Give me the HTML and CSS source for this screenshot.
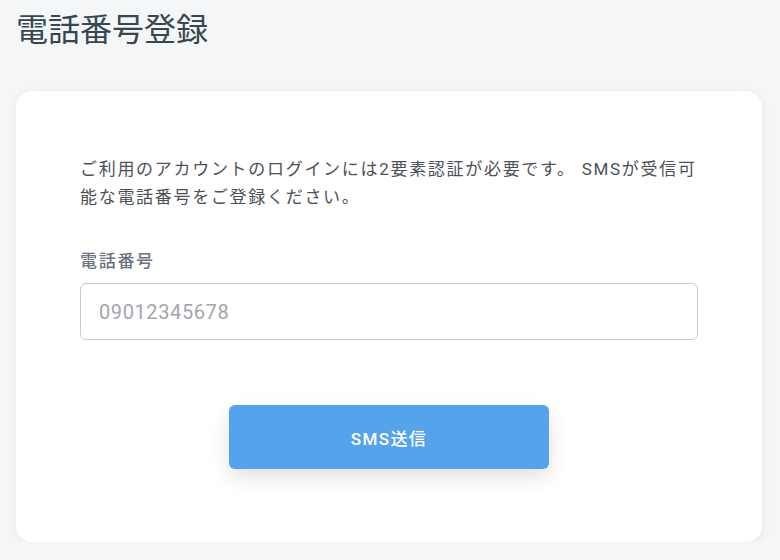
FILE: index.html
```html
<!DOCTYPE html>
<html lang="ja">
<head>
<meta charset="utf-8">
<title>電話番号登録</title>
<link rel="stylesheet" href="styles.css">
</head>
<body>
<main class="page">
  <h1 class="title">電話番号登録</h1>
  <section class="card">
    <p class="lead">ご利用のアカウントのログインには2要素認証が必要です。 SMSが受信可能な電話番号をご登録ください。</p>
    <label class="label" for="tel">電話番号</label>
    <input class="input" id="tel" type="tel" placeholder="09012345678">
    <div class="actions">
      <button class="btn" type="button">SMS送信</button>
    </div>
  </section>
</main>
</body>
</html>
```

FILE: styles.css
```css
* { box-sizing: border-box; }
html, body { margin: 0; padding: 0; }
body {
  background: #f5f6f8;
  font-family: Roboto, "Noto Sans CJK JP", sans-serif;
  color: #4b5157;
}
.page {
  padding: 10px 16px 0 16px;
  width: 780px;
}
.title {
  margin: 0;
  font-size: 32px;
  line-height: 40px;
  font-weight: 400;
  color: #37474f;
}
.card {
  margin-top: 41px;
  width: 746px;
  height: 451px;
  background: #fff;
  border-radius: 16px;
  box-shadow: 0 2px 12px rgba(0, 0, 0, 0.06);
  padding: 64px 64px 0 64px;
  display: flex;
  flex-direction: column;
}
.lead {
  margin: 0;
  width: 622px;
  font-size: 17px;
  line-height: 28px;
  letter-spacing: 0.1em;
  color: #4b5157;
}
.label {
  margin-top: 36px;
  font-size: 17px;
  line-height: 28px;
  letter-spacing: 0.1em;
  font-weight: 500;
  color: #6b7280;
}
.input {
  margin-top: 8px;
  width: 618px;
  height: 57px;
  border: 1px solid #cbcbcb;
  border-radius: 6px;
  padding: 0 18px;
  font-family: Roboto, "Noto Sans CJK JP", sans-serif;
  font-size: 20px;
  letter-spacing: 0.6px;
  color: #333;
  background: #fff;
  outline: none;
}
.input::placeholder { color: #a3a6ab; }
.actions {
  margin-top: 65px;
  display: flex;
  justify-content: center;
}
.btn {
  width: 320px;
  height: 64px;
  border: 0;
  border-radius: 6px;
  background: #55a3eb;
  color: #fff;
  font-family: Roboto, "Noto Sans CJK JP", sans-serif;
  font-size: 17px;
  letter-spacing: 0.08em;
  font-weight: 500;
  box-shadow: 0 8px 20px rgba(0, 0, 0, 0.12);
  cursor: pointer;
}
```
